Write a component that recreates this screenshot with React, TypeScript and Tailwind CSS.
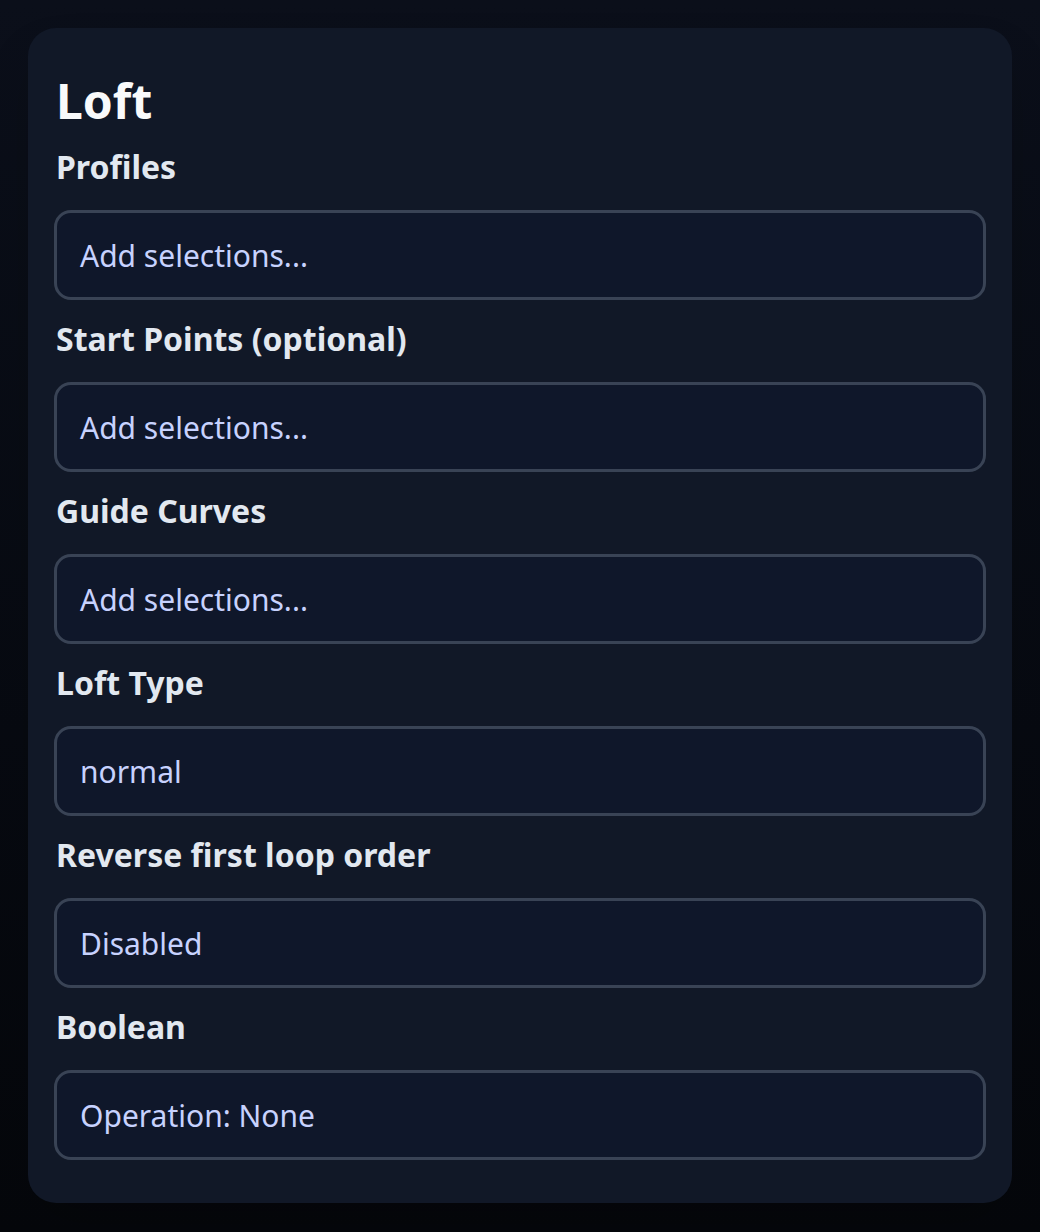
const fields = [
  { label: 'Profiles', value: 'Add selections...' },
  { label: 'Start Points (optional)', value: 'Add selections...' },
  { label: 'Guide Curves', value: 'Add selections...' },
  { label: 'Loft Type', value: 'normal' },
  { label: 'Reverse first loop order', value: 'Disabled' },
  { label: 'Boolean', value: 'Operation: None' },
];

export default function App() {
  return (
    <div
      className="min-h-[1232px] w-full bg-gradient-to-b from-[#0b0f1a] to-[#05070b] p-7"
      style={{ fontFamily: '"Noto Sans", "Open Sans", sans-serif' }}
    >
      <div className="rounded-[28px] bg-[#111827] px-[26px] pt-[49px] pb-[43px] shadow-2xl">
        <h1 className="pl-[2px] text-[48px] font-bold leading-none text-[#f9fafb]">Loft</h1>
        <div className="mt-[23px] flex flex-col gap-5">
          {fields.map((f) => (
            <div key={f.label} className="flex flex-col">
              <label className="pl-[2px] text-[32px] font-bold leading-[38px] text-[#e2e8f0]">{f.label}</label>
              <div className="mt-6 flex h-[90px] items-center rounded-[17px] border-[3px] border-[#394355] bg-[#0f172a] px-[23px] text-[30px] text-[#c7d2fe]">
                {f.value}
              </div>
            </div>
          ))}
        </div>
      </div>
    </div>
  );
}
